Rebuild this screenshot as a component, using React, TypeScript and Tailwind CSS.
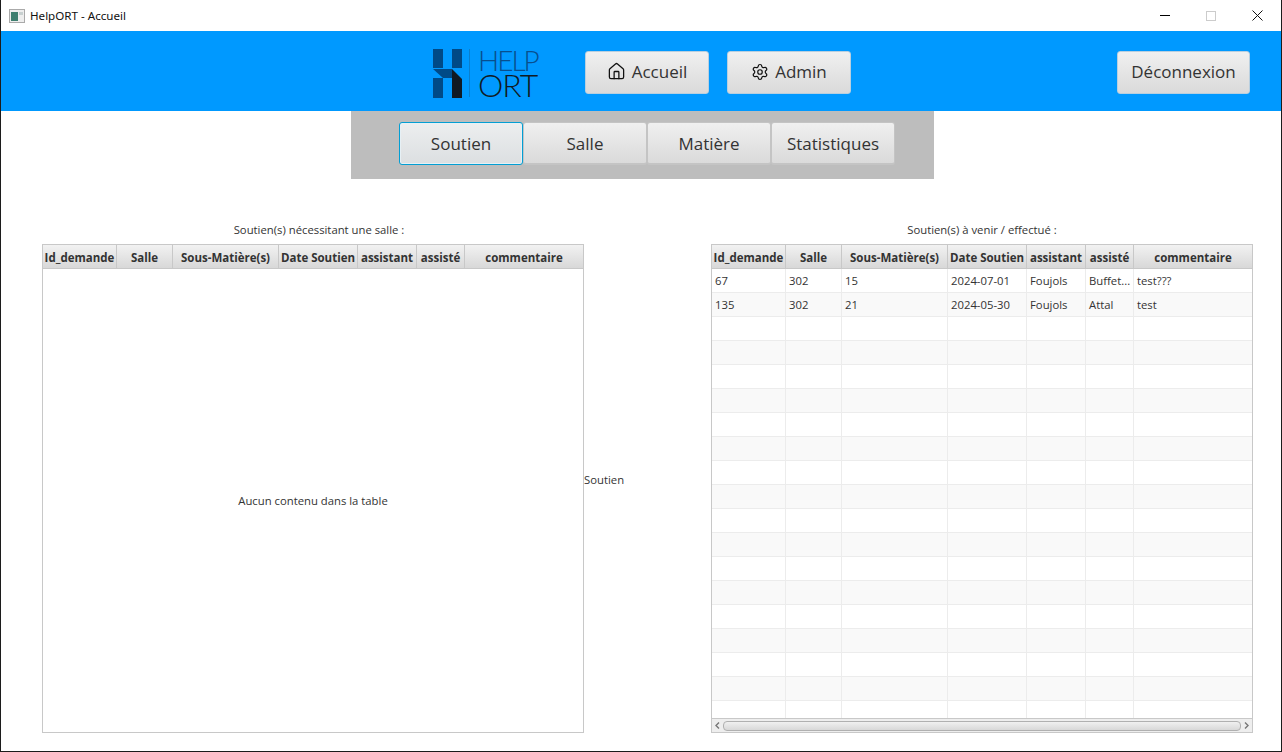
import type { ReactNode } from "react"
import { House, Settings } from "lucide-react"

const columns = [
  { label: "Id_demande", width: "w-[74px]" },
  { label: "Salle", width: "w-[56px]" },
  { label: "Sous-Matière(s)", width: "w-[106px]" },
  { label: "Date Soutien", width: "w-[79px]" },
  { label: "assistant", width: "w-[59px]" },
  { label: "assisté", width: "w-[48px]" },
  { label: "commentaire", width: "w-[118px]" },
]

const rows = [
  ["67", "302", "15", "2024-07-01", "Foujols", "Buffet...", "test???"],
  ["135", "302", "21", "2024-05-30", "Foujols", "Attal", "test"],
  ...Array.from({ length: 17 }, () => ["", "", "", "", "", "", ""]),
]

function TableHeader() {
  return (
    <div className="flex h-[24px] shrink-0 border-b border-[#c8c8c8] bg-gradient-to-b from-[#f2f2f2] to-[#d8d8d8]">
      {columns.map((col) => (
        <div
          key={col.label}
          className={`${col.width} shrink-0 flex items-center justify-center pt-[2px] whitespace-nowrap overflow-hidden border-r border-[#c8c8c8] last:border-r-0 text-[11.5px] font-bold text-[#333]`}
        >
          {col.label}
        </div>
      ))}
    </div>
  )
}

function HeaderButton({ children, width }: { children: ReactNode; width: string }) {
  return (
    <button className={`${width} h-[43px] flex items-center justify-center gap-[6px] pb-[2px] rounded-[3px] border border-[#b9cfdf] bg-gradient-to-b from-[#f0f0f0] to-[#dadada] text-[17px] text-[#333]`}>
      {children}
    </button>
  )
}

function TabButton({ label, active }: { label: string; active?: boolean }) {
  return (
    <button
      className={
        active
          ? "w-[124px] h-[43px] rounded-[3px] border border-[#039ed3] shadow-[inset_0_0_0_1px_#e6f0f5] bg-gradient-to-b from-[#eceeef] to-[#dcdfe1] text-[17px] text-[#333]"
          : "w-[124px] h-[43px] pt-[1px] rounded-[3px] border-b-2 border-x border-t border-[#c4c4c4] bg-gradient-to-b from-[#f0f0f0] to-[#dadada] text-[17px] text-[#333]"
      }
    >
      {label}
    </button>
  )
}

function Logo() {
  return (
    <div className="flex items-center h-[50px] w-[152px]">
      <svg width="30" height="50" viewBox="0 0 30 50" className="shrink-0">
        <rect x="0" y="1" width="10" height="19" fill="#004a87" />
        <rect x="19" y="1" width="10" height="19" fill="#004a87" />
        <polygon points="0,21 19,21 19,30 10,30" fill="#004a87" />
        <rect x="0" y="30" width="10" height="20" fill="#004a87" />
        <polygon points="19,21 29,31 29,50 19,50" fill="#101a24" />
      </svg>
      <div className="ml-[6px] h-[48px] w-px bg-[#0a7fce]" />
      <div className="ml-[8px] flex flex-col leading-none font-['Lato',sans-serif] font-light">
        <span className="text-[28px] leading-[24px] tracking-[-2px] text-[#084f8e]">HELP</span>
        <span className="text-[32px] leading-[26px] tracking-[-1px] text-[#101a24]">ORT</span>
      </div>
    </div>
  )
}

export default function App() {
  return (
    <div className="w-[1282px] h-[752px] flex flex-col overflow-hidden border-x border-b border-[#1c1c1c] bg-white font-['Open_Sans',sans-serif] text-[#333]">
      {/* title bar */}
      <div className="h-[31px] shrink-0 flex items-center bg-white pl-[8px]">
        <svg width="16" height="14" viewBox="0 0 16 14" className="shrink-0">
          <rect x="0.5" y="0.5" width="15" height="13" fill="#eee" stroke="#aaa" />
          <rect x="2" y="3" width="7" height="9" fill="#3f7f70" />
          <rect x="10" y="3" width="4" height="3" fill="#c8d0d0" />
        </svg>
        <span className="ml-[5px] text-[11.6px] text-[#111] font-['Noto_Sans',sans-serif]">HelpORT - Accueil</span>
        <div className="ml-auto flex items-center">
          <div className="w-[10px] h-px bg-black" />
          <div className="ml-[36px] w-[10px] h-[10px] border border-[#ccc]" />
          <svg width="11" height="11" viewBox="0 0 11 11" className="ml-[36px] mr-[18px]">
            <path d="M0.5 0.5 L10.5 10.5 M10.5 0.5 L0.5 10.5" stroke="#111" strokeWidth="1" />
          </svg>
        </div>
      </div>

      {/* main header */}
      <div className="h-[80px] shrink-0 flex items-center bg-[#0099ff] pl-[432px] pt-[3px]">
        <Logo />
        <HeaderButton width="w-[124px]">
          <House size={19} strokeWidth={1.6} className="text-[#111]" />
          Accueil
        </HeaderButton>
        <div className="ml-[18px]">
          <HeaderButton width="w-[124px]">
            <Settings size={18} strokeWidth={1.6} className="text-[#111]" />
            Admin
          </HeaderButton>
        </div>
        <div className="ml-[266px]">
          <HeaderButton width="w-[133px]">Déconnexion</HeaderButton>
        </div>
      </div>

      {/* tabs */}
      <div className="ml-[350px] w-[583px] h-[68px] shrink-0 flex items-start pt-[11px] pl-[48px] bg-[#bdbdbd]">
        <TabButton label="Soutien" active />
        <TabButton label="Salle" />
        <TabButton label="Matière" />
        <TabButton label="Statistiques" />
      </div>

      {/* tables */}
      <div className="flex flex-1 items-start pl-[41px] pt-[42px] text-[11.3px] text-[#333]">
        <div className="w-[542px] flex flex-col">
          <div className="h-[23px] pt-[1px] pl-[12px] text-center whitespace-nowrap">Soutien(s) nécessitant une salle :</div>
          <div className="h-[489px] flex flex-col border border-[#c8c8c8]">
            <TableHeader />
            <div className="flex flex-1 items-center justify-center pt-[2px]">Aucun contenu dans la table</div>
          </div>
        </div>
        <div className="w-[127px] h-[512px] flex items-center pt-[6px]">
          <span>Soutien</span>
        </div>
        <div className="w-[542px] flex flex-col">
          <div className="h-[23px] pt-[1px] text-center whitespace-nowrap">Soutien(s) à venir / effectué :</div>
          <div className="relative h-[489px] flex flex-col overflow-hidden border border-[#c8c8c8]">
            <TableHeader />
            <div className="flex-1 overflow-hidden">
              {rows.map((row, i) => (
                <div key={i} className={i % 2 === 0 ? "flex h-[24px] bg-white" : "flex h-[24px] bg-[#f9f9f9]"}>
                  {row.map((cell, j) => (
                    <div
                      key={j}
                      className={`${columns[j].width} shrink-0 flex items-center pl-[3px] pt-[2px] whitespace-nowrap overflow-hidden border-r border-b border-[#ececec] last:border-r-0`}
                    >
                      {cell}
                    </div>
                  ))}
                </div>
              ))}
            </div>
            {/* scroll bar */}
            <div className="absolute inset-x-0 bottom-0 h-[14px] flex items-center bg-[#eeeeee] border-t border-[#c8c8c8]">
              <svg width="11" height="11" viewBox="0 0 11 11" className="shrink-0">
                <path d="M7 2.5 L4 5.5 L7 8.5" fill="none" stroke="#777" strokeWidth="1.4" />
              </svg>
              <div className="flex-1 h-[10px] rounded-[4px] border border-[#b0b0b0] bg-gradient-to-b from-[#f0f0f0] to-[#d8d8d8]" />
              <svg width="11" height="11" viewBox="0 0 11 11" className="shrink-0">
                <path d="M4 2.5 L7 5.5 L4 8.5" fill="none" stroke="#777" strokeWidth="1.4" />
              </svg>
            </div>
          </div>
        </div>
      </div>
    </div>
  )
}
